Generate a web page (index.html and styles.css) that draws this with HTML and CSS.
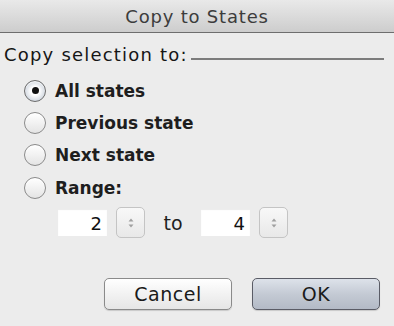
FILE: index.html
```html
<!DOCTYPE html>
<html lang="en">

<head>
    <meta charset="UTF-8">
    <meta name="viewport" content="width=device-width, initial-scale=1.0">
    <title>Copy to States</title>
    <link rel="stylesheet" href="styles.css">
</head>

<body>
    <div class="dialog">
        <div class="title-bar">Copy to States</div>

        <div class="content">
            <div class="heading">
                <span class="heading-text">Copy selection to:</span>
                <span class="heading-line"></span>
            </div>

            <div class="options">
                <label class="option">
                    <span class="radio checked"><span class="dot"></span></span>
                    <span>All states</span>
                </label>
                <label class="option">
                    <span class="radio"></span>
                    <span>Previous state</span>
                </label>
                <label class="option">
                    <span class="radio"></span>
                    <span>Next state</span>
                </label>
                <label class="option">
                    <span class="radio"></span>
                    <span>Range:</span>
                </label>
            </div>

            <div class="range-row">
                <div class="num-box">2</div>
                <div class="stepper">
                    <svg width="8" height="14" viewBox="0 0 8 14">
                        <path d="M1.5 5.5 L4 2.5 L6.5 5.5 Z" fill="#a0a0a0" />
                        <path d="M1.5 8.5 L4 11.5 L6.5 8.5 Z" fill="#a0a0a0" />
                    </svg>
                </div>
                <span class="to-label">to</span>
                <div class="num-box">4</div>
                <div class="stepper">
                    <svg width="8" height="14" viewBox="0 0 8 14">
                        <path d="M1.5 5.5 L4 2.5 L6.5 5.5 Z" fill="#a0a0a0" />
                        <path d="M1.5 8.5 L4 11.5 L6.5 8.5 Z" fill="#a0a0a0" />
                    </svg>
                </div>
            </div>

            <div class="buttons">
                <button class="btn">Cancel</button>
                <button class="btn btn-default">OK</button>
            </div>
        </div>
    </div>
</body>
</html>
```

FILE: styles.css
```css
html, body {
    margin: 0;
    padding: 0;
    background-color: #ececec;
    font-family: "DejaVu Sans", "Open Sans", sans-serif;
}

.dialog {
    width: 394px;
    height: 326px;
    display: flex;
    flex-direction: column;
    background-color: #ececec;
}

.title-bar {
    height: 32px;
    line-height: 34px;
    text-align: center;
    font-size: 18px;
    letter-spacing: 0.8px;
    color: #3c3c3c;
    background: linear-gradient(#e9e9e9, #cdcdcd);
    border-bottom: 1px solid #6e6e6e;
}

.content {
    flex-grow: 1;
    display: flex;
    flex-direction: column;
}

.heading {
    display: flex;
    align-items: flex-end;
    padding: 8px 10px 0 4px;
    height: 24px;
    font-size: 18px;
    letter-spacing: 1.2px;
    color: #161616;
}

.heading-line {
    flex-grow: 1;
    margin-left: 3px;
    margin-bottom: 5px;
    border-bottom: 2px solid #7c7c7c;
}

.options {
    display: flex;
    flex-direction: column;
    padding: 9.5px 0 0 24px;
}

.option {
    display: flex;
    align-items: center;
    height: 32.3px;
    gap: 9px;
    font-size: 17px;
    font-weight: bold;
    color: #1e1e1e;
}

.radio {
    width: 20px;
    height: 20px;
    border-radius: 50%;
    border: 1px solid #8a8a8a;
    background: linear-gradient(#ffffff, #e4e4e4);
    box-shadow: inset 0 1px 1px rgba(255, 255, 255, 0.9);
    display: flex;
    align-items: center;
    justify-content: center;
}

.radio.checked {
    background: radial-gradient(circle, #ffffff 30%, #d4dae2 70%, #b5bcc6);
    border-color: #6c6c6c;
}

.dot {
    width: 7px;
    height: 7px;
    border-radius: 50%;
    background-color: #111;
}

.range-row {
    display: flex;
    align-items: center;
    padding: 3.5px 0 0 58px;
    height: 31px;
}

.num-box {
    width: 44px;
    height: 27px;
    padding-right: 5px;
    background-color: #ffffff;
    box-sizing: content-box;
    text-align: right;
    line-height: 29px;
    font-size: 18px;
    color: #111;
    box-shadow: inset 0 1px 1px rgba(0, 0, 0, 0.08);
}

.stepper {
    width: 27px;
    height: 29px;
    margin-left: 9px;
    border: 1px solid #c4c4c4;
    border-radius: 5px;
    background: linear-gradient(#f8f8f8, #e8e8e8);
    display: flex;
    align-items: center;
    justify-content: center;
}

.to-label {
    width: 56px;
    text-align: center;
    font-size: 19px;
    color: #1e1e1e;
}

.buttons {
    display: flex;
    justify-content: flex-end;
    gap: 20px;
    padding: 40px 14px 0 0;
}

.btn {
    width: 128px;
    height: 32px;
    padding: 0;
    border: 1px solid #8a8a8a;
    border-radius: 5px;
    background: linear-gradient(#ffffff, #f2f2f2 50%, #e6e6e6);
    font-family: "DejaVu Sans", "Open Sans", sans-serif;
    font-size: 19px;
    letter-spacing: 0.5px;
    color: #1a1a1a;
    box-shadow: 0 1px 1px rgba(0, 0, 0, 0.15);
}

.btn-default {
    border-color: #5a5c66;
    background: linear-gradient(#dde2ea, #c4cad4 50%, #b3bac6);
}
```
